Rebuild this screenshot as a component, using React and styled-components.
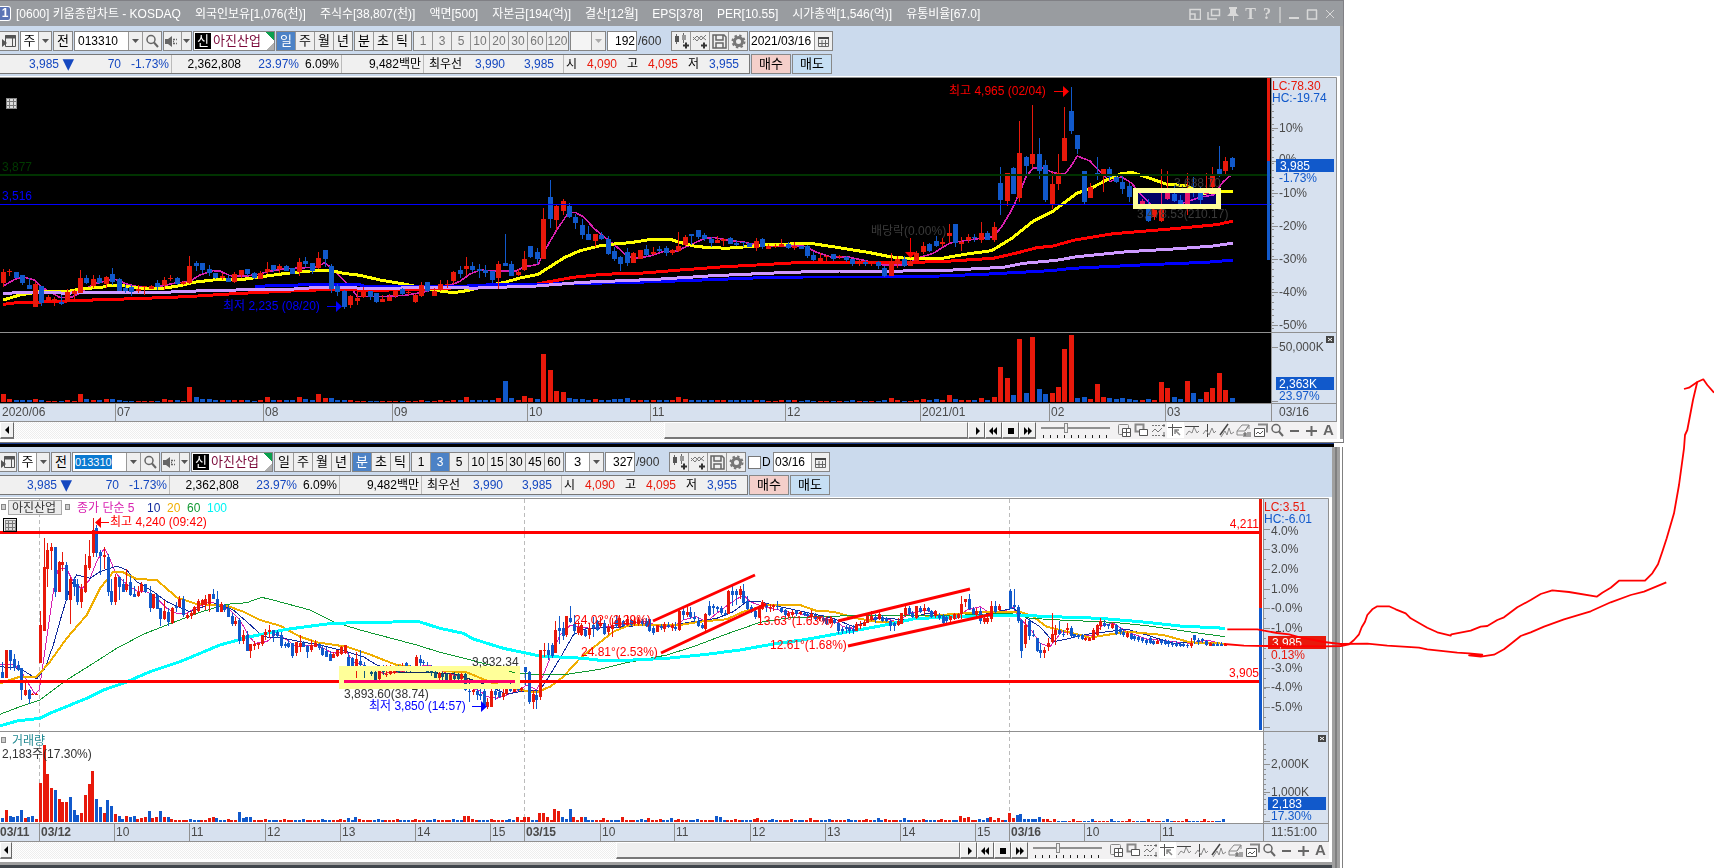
import React from "react";
import styled, { createGlobalStyle, css } from "styled-components";

const UI = '"Liberation Sans", "Noto Sans CJK KR", sans-serif';
const RED = "#e8190b";
const BLUE = "#1159cb";
const LINE = "#909090";
const AXIS = "#d7e1ef";

const Global = createGlobalStyle`
  body { margin: 0; background: #fff; font: 12px/18px ${UI}; color: #000; overflow-x: hidden; }
  * { box-sizing: border-box; }
  button, input, select { font: inherit; color: inherit; margin: 0; padding: 0; border: 0; border-radius: 0; }
`;

/* ---------- layout ---------- */
const Stage = styled.main`
  position: relative;
  display: grid;
  grid-template-columns: 1345fr 369fr;
  overflow: hidden;
`;
const Windows = styled.div`
  display: flex;
  flex-direction: column;
  min-width: 0;
`;
const TopWindow = styled.section`
  margin-right: 1px;
  border-top: 1px solid #808085;
  border-right: 1px solid #808085;
  border-bottom: 1px solid #777;
`;
const TopBody = styled.div`
  border-right: 3px solid #a0a0a0;
`;
const Divider = styled.div`
  height: 4px;
  margin-right: 11px;
  background: #000;
  border-top: 1px solid #1c3c8c;
`;
const BottomWindow = styled.section`
  display: grid;
  grid-template-columns: minmax(0, 1fr) 8px;
  margin-right: 2px;
  padding-right: 2px;
  border-right: 1px solid #808080;
`;
const Edge = styled.div`
  background: linear-gradient(90deg, #a0a0a0 0 3px, #808080 3px 5px, #a0a0a0 5px);
`;
const Base = styled.div`
  height: 6px;
  background: #a0a0a0;
  border-bottom: 3px solid #40464c;
`;
const Panel = styled.div`
  padding-right: 3px;
  background: #fff;
`;

const TitleBar = styled.header`
  display: flex;
  align-items: center;
  height: 25px;
  padding-right: 7px;
  background: #999ca0;
  color: #fff;
`;
const TitleBadge = styled.span`
  width: 11px;
  height: 15px;
  margin-right: 5px;
  border: 1px solid #fff;
  border-left: 0;
  border-radius: 0 3px 3px 0;
  background: #5b74b5;
  font: bold 12px/13px ${UI};
  text-align: center;
`;
const Title = styled.h1`
  display: flex;
  gap: 14px;
  margin: 0;
  font: 12px/18px ${UI};
  white-space: nowrap;
`;
const WindowTools = styled.div`
  display: flex;
  align-items: center;
  gap: 6px;
  margin-left: auto;
`;
const WindowTool = styled.button`
  display: grid;
  place-items: center;
  width: ${(p) => p.$w || 12}px;
  height: 16px;
  background: none;
  color: #d8d8d8;
  font: bold 16px/16px "Liberation Serif", serif;
`;

const Tools = styled.div`
  padding-bottom: 2px;
  background: #cbdaed;
  border-bottom: 1px solid #fff;
`;
const ToolRow = styled.div`
  display: flex;
  align-items: center;
  gap: 1px;
  padding-top: ${(p) => p.$top}px;
  white-space: nowrap;
`;
const Group = styled.div`
  display: flex;
  height: 20px;
  border: 1px solid #858585;
  background: #fff;
  & > * + * { border-left: 1px solid #999; }
  ${(p) => p.$edge && css`border-left: 0;`}
`;
const Cell = styled.button`
  display: grid;
  place-items: center;
  width: ${(p) => p.$w || 19}px;
  height: 18px;
  font-size: ${(p) => (p.$num ? 12 : 13)}px;
  line-height: 18px;
  background: #efefef;
  color: ${(p) => (p.$dim ? "#777" : "#000")};
  ${(p) => p.$on && css`background: #4c82c6; color: #fff;`}
`;
const Field = styled.input`
  width: ${(p) => p.$w}px;
  height: 18px;
  padding: 0 1px;
  background: #fff;
  text-align: ${(p) => p.$align || "left"};
`;
const Picked = styled.span`
  display: flex;
  align-items: center;
  width: ${(p) => p.$w}px;
  padding-left: 2px;
`;
const CodeField = styled.input`
  width: 37px;
  height: 14px;
  background: #0b7ad1;
  color: #fff;
  font: 11px/14px ${UI};
`;
const Select = styled.select`
  width: ${(p) => p.$w}px;
  height: 18px;
  appearance: none;
  background: ${(p) => (p.$off ? "#efefef" : "#fff")};
  text-align: center;
  text-align-last: center;
  font-size: 13px;
`;
const NameTag = styled.div`
  display: flex;
  align-items: center;
  width: 80px;
  padding-left: 1px;
  background: linear-gradient(225deg, #0aa04e 0 6px, transparent 6px),
    linear-gradient(315deg, #b0b0b0 0 5px, #fff 5px);
  color: #7a0838;
  font-size: 13px;
`;
const NewTag = styled.b`
  width: 16px;
  height: 16px;
  margin-right: 2px;
  background: #000;
  color: #fff;
  font: 13px/16px ${UI};
  text-align: center;
`;
const Total = styled.span`
  width: 32px;
  color: #333;
`;
const DayBox = styled.label`
  display: flex;
  align-items: center;
  width: 24px;
  margin-left: 1px;
  gap: 1px;
  input {
    width: 13px;
    height: 13px;
    appearance: none;
    border: 1px solid #777;
    background: #fff;
  }
`;

const Strip = styled.div`
  display: flex;
  height: 20px;
  border: 1px solid #777;
  border-left: 0;
  background: #f0f0f0;
`;
const Figure = styled.span`
  width: ${(p) => p.$w}px;
  text-align: right;
  padding-right: ${(p) => p.$pad || 0}px;
  border-right: ${(p) => (p.$end ? "1px solid #bbb" : "0")};
  color: ${(p) => p.$c || "#000"};
`;
const Falling = styled(Figure)`
  font: 15px/18px "DejaVu Sans", sans-serif;
`;
const Order = styled.button`
  width: 40px;
  height: 20px;
  border: 1px solid #888;
  background: ${(p) => (p.$buy ? "#f4cfca" : "#c6dff4")};
  font-size: 13px;
`;

const ChartSvg = styled.svg`
  display: block;
  width: 100%;
  font: 12px ${UI};
`;

const Controls = styled.div`
  display: flex;
  align-items: flex-start;
  height: 17px;
  margin-bottom: 3px;
  background: #f2f1f2;
`;
const Track = styled.div`
  flex: 1;
  display: flex;
  height: 17px;
  background: repeating-conic-gradient(#fff 0 25%, #eee 0 50%) 0 0 / 2px 2px;
`;
const Thumb = styled.div`
  width: ${(p) => p.$w}px;
  margin-left: auto;
  background: #efefef;
  border: 1px solid #fff;
  border-right-color: #777;
  border-bottom: 2px solid #777;
`;
const Push = styled.button`
  display: grid;
  place-items: center;
  width: ${(p) => p.$w || 17}px;
  height: 17px;
  background: #f0f0f0;
  border: 1px solid #fff;
  border-right: 1px solid #666;
  border-bottom: 2px solid #777;
`;
const Range = styled.input`
  width: 69px;
  height: 16px;
  margin: 0 6px 0 5px;
  appearance: none;
  background:
    linear-gradient(#909090, #909090) 0 5px / 69px 2px no-repeat,
    repeating-linear-gradient(90deg, transparent 0 2px, #222 2px 3px, transparent 3px 7px) 0 13px / 69px 3px no-repeat;
  &::-webkit-slider-thumb {
    appearance: none;
    width: 4px;
    height: 10px;
    margin-top: -5px;
    border: 1px solid #888;
    background: #eee;
  }
`;
const ToolSet = styled.div`
  display: flex;
`;
const Tool = styled.button`
  display: grid;
  place-items: center;
  width: 17px;
  height: 16px;
  background: ${(p) => (p.$on ? "#fff" : "none")};
`;
const Ink = styled.svg`
  position: absolute;
  inset: 0;
  width: 100%;
  height: 100%;
  pointer-events: none;
`;

/* ---------- icons ---------- */
const Svg = ({ w = 15, h = 15, children, c = "#666" }) => (
  <svg width={w} height={h} viewBox={`0 0 ${w} ${h}`} fill="none" stroke={c} aria-hidden="true">
    {children}
  </svg>
);
const Down = ({ c = "#555" }) => (
  <Svg w={9} h={5} c="none"><path d="M1 0h7L4.500 4z" fill={c} /></Svg>
);
const icons = {
  panel: <Svg w={16} h={16}><path d="M4.500 2.500h10v11h-10z" stroke="#555" /><path d="M4 4h11" stroke="#555" strokeWidth="3" /><path d="M11.500 5v9" stroke="#555" /><path d="M1 6l5 4-5 4z" fill="#555" stroke="none" /></Svg>,
  search: <Svg><circle cx="6" cy="5.500" r="4" strokeWidth="1.500" /><path d="M9 8.500l4 4.500" strokeWidth="2" /></Svg>,
  sound: <Svg><path d="M0 5h3l4-3v11l-4-3H0z" fill="#666" stroke="none" /><path d="M8 5.500h2M8 9.500h2M11 5.500h1M11 9.500h1M8 7.500h1" strokeWidth="1.500" /></Svg>,
  candles: <Svg w={17} h={16}><path d="M3.500 1v10M10.500 0v10" /><path d="M2 3h4v6H2z" fill="#555" stroke="none" /><path d="M9 2h4v5H9z" fill="#999" stroke="none" /><path d="M10 12.500h6M13 9.500v6" stroke="#333" strokeWidth="2" /></Svg>,
  waves: <Svg w={17} h={16}><path d="M1 7l4-4 4 4 5-5M1 4l4 4 4-5 5 4" stroke="#777" /><path d="M9 12.500h6M12 9.500v6" stroke="#333" strokeWidth="2" /></Svg>,
  save: <Svg><path d="M1 1h11l2 2v11H1z" strokeWidth="1.500" /><path d="M4 1v5h7V1M4 14V9h7v5" strokeWidth="1.500" /></Svg>,
  gear: <Svg><circle cx="7.500" cy="7.500" r="4" stroke="#777" strokeWidth="3" /><circle cx="7.500" cy="7.500" r="6" stroke="#777" strokeWidth="2" strokeDasharray="2.400 2.300" /></Svg>,
  cal: <Svg w={13} h={13}><path d="M1.500 2.500h10v9h-10zM1.500 8.500h10M5 5v6M8.500 5v6" /><path d="M1 3h11" stroke="#444" strokeWidth="2" /></Svg>,
  addBox: <Svg><rect x="1.500" y="1.500" width="10" height="10" rx="1" stroke="#888" /><path d="M5.500 5.500h8v8h-8z" fill="#fff" stroke="#555" /><path d="M9.500 6v8M6 9.500h8" stroke="#555" /></Svg>,
  boxes: <Svg><path d="M1.500 1.500h8v7h-8z" stroke="#888" strokeWidth="2" /><path d="M5.500 6.500h8v6h-8z" fill="#fff" stroke="#555" /></Svg>,
  fit: <Svg><path d="M1 2.500h9M1 12.500h9" strokeDasharray="2 1" stroke="#777" /><path d="M1 9l3-3 3 3 4-4" stroke="#777" /><path d="M13 1v3M13 9v5M11 2.500h3M11 12.500h3" stroke="#666" /></Svg>,
  cross: <Svg><path d="M0 4.500h14M4.500 1v12" stroke="#555" /><path d="M7 7l5 5M7 11V7h4" stroke="#888" strokeWidth="1.500" /></Svg>,
  hline: <Svg><path d="M0 3.500h14" stroke="#444" /><path d="M1 12l3-4 3 2 2-6 3 6 2-2" stroke="#888" /></Svg>,
  vline: <Svg><path d="M5.500 1v13" stroke="#444" /><path d="M1 11l3-4 3 5 3-7 2 5 2-2" stroke="#888" /></Svg>,
  slope: <Svg><path d="M1 12L9 1" stroke="#444" strokeWidth="1.500" /><path d="M2 14l4-6 2 4 2-7 2 6 3-2" stroke="#888" /></Svg>,
  eraser: <Svg><path d="M1 8l5-6h7l-4 6H1v4h6M9 8l4-6v4" stroke="#888" /><path d="M8 14v-4h2v4M8 12h2M12 9v5M14 9v5" stroke="#555" /></Svg>,
  sheets: <Svg><path d="M5 1.500h9v8" stroke="#888" strokeWidth="2" /><path d="M1.500 5.500h10v8h-10z" fill="#fff" stroke="#555" /><path d="M3 11l2-2 2 2 3-3" stroke="#555" /></Svg>,
  minus: <Svg><path d="M3 8h9" strokeWidth="2" /></Svg>,
  plus: <Svg><path d="M2 8h11M7.500 3v10" strokeWidth="2" /></Svg>,
};

/* ---------- chart data ---------- */
const candles = (str, ox, oy, start, step) =>
  str.split(";").map((s, i) => {
    const f = s.trim().split(/\s+/);
    const x = start === undefined ? ox + Number(f.shift()) / 3 : start + step * i;
    const red = f.shift() === "r";
    const [h, t, b, l] = f.map((v) => Math.round(oy + v / 3));
    return { x: Math.floor(x), red, h, t, b, l };
  });

const DAILY = [
  ...candles(
    "r 357 366 399 411;r 357 362 366 378;b 366 366 384 384;b 375 375 399 405;b 384 405 417 417;r 396 402 471 471;b 408 408 459 468;r 435 441 453 453;r 441 447 453 468;b 435 456 461 465;r 417 426 456 456;r 420 423 432 453;r 360 384 429 429;b 375 384 399 402;r 375 387 408 414;b 375 384 399 402;r 378 381 402 414;b 354 372 396 405;b 384 387 423 423;b 405 414 423 429;b 405 411 426 438;r 405 417 423 429;r 408 408 411 435;r 405 408 417 417;b 390 399 411 420;r 381 390 405 420;r 375 383 387 393;b 381 384 402 405;r 393 397 401 405;r 318 348 399 402;b 333 339 348 363;b 339 339 360 369;b 345 357 369 378;b 369 369 384 387;r 369 378 384 390;b 375 384 396 396;r 366 372 396 399;r 360 360 375 384;b 357 357 372 378;b 366 369 384 387;r 363 369 387 387;r 336 357 366 372;b 345 345 360 366;r 342 348 357 369;b 345 348 363 363;b 354 354 372 372;r 324 336 366 378;b 321 333 342 351;b 339 339 363 372;r 306 324 354 357;b 300 300 327 351;b 342 348 417 429;b 402 408 426 438;b 420 423 471 477;r 435 438 465 474;r 426 444 453 465;r 411 426 441 444;b 423 423 441 450;b 429 429 456 459;r 435 447 456 456;r 432 441 453 453;r 420 423 438 444;b 414 417 432 435;r 420 426 430 435;r 432 435 456 459;r 396 405 438 441;b 396 396 423 426;r 414 423 438 438;r 390 402 420 423;r 390 401 405 414;r 363 366 393 402;b 348 360 372 384;r 321 348 357 378;b 336 348 360 366;b 342 357 363 384;b 345 360 369 381;b 363 363 390 399;r 333 342 384 417;b 252 339 348 348;b 333 342 378 378;r 357 366 375 378;r 303 327 360 363;b 288 288 321 324;b 294 306 327 342;r 174 207 327 327;b 90 141 207 234;r 165 168 210 240;r 147 153 183 195;b 159 168 201 204;b 192 201 219 237;b 207 225 255 267;b 228 252 270 270;r 252 252 273 291;b 246 255 267 270;b 258 267 312 315;b 291 303 327 333;b 318 321 342 363;b 294 306 339 348;r 306 309 339 339;r 300 300 327 327;b 285 297 315 318;r 291 306 312 315;b 288 297 303 306;b 288 294 309 318;r 297 300 309 315;r 246 288 303 306;r 255 261 285 288;b 252 252 258 285;b 240 240 261 267;b 249 255 267 273;b 261 267 279 291;r 258 270 279 279;r 264 267 273 288;b 261 264 282 282;b 270 279 285 288;b 276 276 280 291;b 279 279 291 291;r 264 273 294 303;b 264 267 291 297;r 282 288 297 297;r 282 287 291 294;r 267 282 291 291;b 276 282 294 297;r 276 288 293 300;b 288 288 297 297;b 285 288 318 324;b 306 315 330 333;r 309 324 333 336;r 315 317 321 333;b 312 312 327 333;r 315 319 322 327;b 318 321 330 336;b 327 327 342 348;r 330 333 342 348;b 330 336 342 348;r 333 337 340 348;b 333 336 348 357;b 348 354 378 381;r 309 333 378 378;r 318 327 342 354;b 318 327 348 351;r 330 333 348 348;r 303 309 333 333;r 276 288 306 312;b 279 282 303 306;b 258 273 288 291;r 264 276 282 291",
    0, 150, 3.3, 6.434
  ),
  ...candles(
    "r 432 459 468 489;b 432 432 489 501;r 471 487 491 513;r 462 471 480 489;b 462 471 475 486;r 426 459 480 489;b 453 459 480 480;r 426 441 480 486;b 261 309 360 405;r 279 279 363 378;b 261 264 342 342;r 123 219 354 366;b 228 231 258 282;r 75 222 252 264;b 174 222 273 297;b 240 255 360 366;r 276 312 375 388;r 222 279 312 330;r 81 174 243 243;b 21 93 153 161;b 165 165 207 222;b 273 273 366 372;r 309 321 354 354;b 231 279 285 300;r 267 267 285 336;b 261 267 291 300;b 285 290 306 309;b 288 306 327 342;b 309 318 351 366;b 345 350 366 372;r 357 363 375 380;b 357 372 423 426;r 375 381 411 420;r 267 383 423 426;r 273 340 356 360;b 318 342 363 366;b 345 360 376 390;r 279 340 375 405;b 290 318 322 350;b 321 340 360 378;r 279 339 342 345;r 261 288 321 339;b 198 267 282 291;r 231 243 273 282;b 231 234 261 270",
    0, 80, 949.1, 6.434
  ),
];
const DAILY_VOLUME =
  "8 3 2 2 2 3 2 1 1 1 2 1 8 3 2 2 3 3 2 1 1 1 1 1 1 3 2 2 1 15 5 3 3 2 2 2 2 2 2 1 2 5 2 2 2 2 5 3 2 8 4 4 2 2 2 1 1 1 1 1 1 1 1 1 1 2 1 1 2 1 2 2 5 2 2 2 2 4 21 4 2 6 4 3 48 32 11 10 4 3 3 2 3 2 2 3 3 4 2 2 2 2 2 2 2 5 3 2 2 2 2 2 2 2 2 2 2 2 2 1 1 2 2 2 1 2 1 1 1 1 1 1 2 1 1 1 1 2 4 2 1 1 2 3 2 3 2 7 3 2 2 2 4 2 5 35 24 7 63 9 65 13 8 9 15 53 67 4 5 3 18 5 4 3 4 3 2 2 3 2 20 14 5 3 21 9 3 10 14 29 12 4"
    .split(" ").map(Number);
const RISING_VOLUME = [50, 82, 85, 155, 166, 170, 189];

const MINUTE = [
  ...candles(
    "8 b 680 711 729 729;20 r 645 645 729 729;31 b 645 645 678 705;43 b 657 672 700 708;54 b 678 690 705 708;65 b 700 700 765 795;77 r 735 765 780 783;88 b 762 765 793 808;98 r 774 777 780 781;110 r 775 777 780 780;122 r 528 570 684 684;134 r 309 396 588 588;143 r 324 345 402 456;155 r 324 335 348 405;167 b 336 336 471 485;179 r 378 381 471 471;187 r 351 381 390 408;199 b 381 390 495 495;211 r 426 432 495 567;223 b 426 432 456 482;232 b 432 447 501 510;244 r 447 462 501 520;257 r 357 390 471 474;268 r 315 363 398 405;281 r 249 285 354 366;290 b 270 279 354 366;301 b 345 351 363 420;313 r 336 359 366 402;325 b 357 366 471 482;335 b 432 468 500 510;347 r 417 426 501 510;359 b 426 426 456 495;370 b 432 447 470 471;379 r 402 447 465 471;392 b 423 441 480 483;403 b 453 477 486 486;415 r 453 471 482 486;425 r 441 447 468 474;436 b 447 447 471 474;450 b 453 475 520 531;460 r 477 477 520 522;471 b 477 480 522 522;482 b 519 520 552 573;493 r 495 528 552 555;505 b 519 530 560 573;517 r 516 519 564 567;528 b 500 514 518 530;539 r 483 492 516 516;550 b 483 492 540 546;562 r 534 540 549 552;573 r 528 534 543 552;583 r 513 516 537 540;595 r 492 498 528 530;606 r 492 495 510 516;617 r 480 492 510 525;628 r 477 477 507 531;640 b 462 477 492 492;652 b 468 492 531 531;663 r 501 507 531 531;673 b 507 510 525 531;685 b 510 519 546 546;697 b 534 543 567 573;706 r 546 558 567 573;718 b 549 555 618 627;730 r 585 600 618 627;741 b 588 600 648 648;752 r 627 627 648 669;763 r 618 627 633 645;775 r 625 625 629 641;787 r 600 600 627 633;797 r 582 591 600 615;808 r 570 586 590 609;820 b 585 585 603 621;832 b 585 591 603 609;844 b 591 600 633 639;855 b 621 627 633 639;866 b 615 624 636 639;877 b 624 624 663 669;890 r 621 621 654 663;900 r 600 624 636 651;911 b 618 624 636 636;922 b 630 633 651 669;935 r 615 630 645 651;947 r 615 624 636 636;958 b 624 627 639 645;967 b 630 639 660 663;979 b 636 648 666 666;990 b 648 657 678 678;1001 r 651 657 669 669;1013 r 645 645 663 666;1023 r 633 636 657 660;1035 r 630 630 654 657;1046 b 654 666 693 700;1058 b 666 669 693 700;1070 r 651 672 693 728;1081 b 645 678 690 700;1092 b 680 690 694 728;1115 b 700 710 718 722;1127 b 705 710 735 740;1138 r 696 706 733 735;1150 b 690 700 712 720;1160 r 690 717 720 725;1172 r 690 705 716 720;1184 r 695 706 715 718;1195 b 690 706 712 714;1207 r 685 693 708 710;1218 b 681 685 696 710;1230 b 690 697 708 710;1250 r 660 666 696 696;1260 b 660 672 684 694;1271 b 675 681 685 690;1283 b 680 700 712 714;1295 b 690 708 715 722;1306 b 700 712 728 730;1318 r 712 715 728 735",
    0, 435
  ),
  ...candles(
    "8 b 712 717 727 735;20 b 715 718 735 737;31 r 715 720 735 738;43 b 712 722 733 737;54 b 715 717 732 740;65 r 714 716 732 738;77 b 714 717 765 768;88 b 735 768 772 800;99 r 762 765 771 780;111 b 750 768 780 795;122 b 762 777 783 795;133 b 755 768 810 816;143 r 790 801 816 822;155 r 762 768 816 816;166 b 755 768 780 795;178 b 762 770 786 790;189 r 762 775 785 795;200 r 756 763 777 780;212 b 745 758 768 772;223 r 758 763 771 771;235 b 760 762 766 768;245 r 756 760 766 770;257 b 696 696 712 750;268 b 708 711 801 807;280 r 765 777 801 822;290 b 765 780 795 822;302 r 645 645 786 795;313 r 624 645 649 666;325 b 624 645 661 675;336 b 624 630 663 669;347 r 558 585 654 654;359 b 543 579 587 627;370 b 561 579 603 615;380 r 543 543 600 606;392 b 513 549 560 565;404 b 540 567 588 600;415 r 558 576 594 600;425 r 564 570 600 603;437 b 580 585 603 606;448 r 564 579 600 612;459 b 546 570 580 606;471 b 555 558 585 588;482 r 546 564 573 580;493 b 555 564 597 600;505 r 567 576 591 600;516 r 550 570 582 606;528 b 540 555 573 579;539 r 540 550 575 578;550 b 555 558 573 576;561 r 540 552 570 573;573 b 552 556 570 574;584 r 546 558 567 574;595 r 546 555 567 573;606 b 552 558 567 572;618 b 549 558 573 576;628 b 552 552 588 591;640 b 573 579 594 600;652 r 570 570 591 591;663 b 567 573 578 585;673 r 561 567 582 591;685 b 561 569 575 580;696 r 564 570 579 588;707 b 561 576 583 588;718 r 525 528 585 588;730 b 516 528 540 555;741 r 513 530 540 545;752 b 516 531 546 552;763 b 531 546 552 561;775 b 546 558 573 576;787 b 564 570 580 582;797 r 534 537 582 588;808 b 498 513 540 542;820 b 507 514 518 536;832 b 513 517 521 530;844 b 513 518 534 540;855 b 525 534 540 543;866 r 465 468 537 537;877 b 453 468 480 513;889 b 462 468 480 510;900 r 453 462 480 492;911 b 447 468 504 504;922 b 483 498 522 525;935 b 510 516 531 534;947 b 516 528 546 552;958 r 510 519 546 549;967 r 495 501 522 525;980 b 504 511 517 530;990 r 507 515 520 530;1001 r 507 510 516 528;1013 b 498 513 516 525;1024 b 516 519 530 534;1035 b 522 525 540 546;1046 r 528 533 543 549;1058 r 525 531 540 546;1069 b 525 529 536 543;1081 r 528 532 538 540;1092 b 528 534 540 543;1103 b 530 537 543 549;1115 r 525 537 545 555;1127 b 534 540 552 555;1138 r 543 546 552 558;1150 b 540 549 558 564;1160 b 546 552 567 570;1172 r 546 552 563 567;1184 b 552 555 564 567;1194 b 555 564 588 597;1207 b 576 582 587 597;1218 b 570 577 582 594;1229 b 570 578 588 597;1240 b 570 583 588 597;1250 r 561 567 588 588;1261 r 558 567 573 582;1272 r 555 561 573 573;1283 r 537 543 564 564;1295 r 528 543 555 558;1306 b 537 546 555 564;1318 r 525 537 552 555",
    440, 435
  ),
  ...candles(
    "8 b 540 547 558 560;20 b 546 549 558 561;31 b 555 558 572 587;43 b 560 564 573 587;54 r 549 558 570 573;65 r 534 534 567 567;77 r 510 519 540 546;88 b 513 519 537 540;98 b 528 534 546 549;110 r 513 513 549 552;122 b 513 519 531 534;133 r 507 519 528 540;144 b 516 519 528 531;155 b 525 528 546 549;166 r 525 528 543 549;178 b 534 540 549 555;189 b 537 543 564 570;200 b 540 546 558 567;211 r 543 543 555 567;223 r 534 537 552 555;235 r 534 537 549 552;245 r 483 507 537 552;257 r 492 492 501 516;268 b 477 492 522 525;280 b 516 522 537 540;290 r 519 528 540 545;301 b 519 528 558 567;313 r 540 549 561 567;323 r 540 549 561 567;335 r 498 513 552 561;347 b 498 513 531 534;359 r 507 513 525 528;391 b 462 468 522 522;403 b 462 510 517 522;415 b 510 516 558 564;425 b 552 555 648 669;437 r 552 570 627 639;448 b 552 558 603 615;460 b 585 600 603 606;472 b 609 609 648 650;482 b 624 645 654 669;493 r 636 645 654 669;505 r 609 624 636 648;517 r 534 597 621 624;527 r 570 585 600 630;539 b 558 585 597 600;551 b 585 596 600 605;562 r 564 580 586 600;573 b 573 579 603 606;584 b 597 597 606 609;595 b 597 600 606 612;606 b 597 600 612 615;617 r 606 609 615 618;629 r 606 609 617 618;640 r 579 585 615 615;652 r 567 570 600 603;662 r 549 558 573 585;673 b 555 564 573 576;685 b 567 568 573 582;697 r 561 567 579 582;709 b 567 570 597 600;720 b 576 582 591 600;731 b 585 591 600 606;742 r 588 594 606 609;753 b 594 597 612 615;764 b 600 603 612 618;776 b 603 606 615 620;787 b 606 609 618 624;798 b 612 615 624 630;810 b 606 609 624 628;820 b 615 618 627 630;832 r 612 618 627 627;844 b 612 615 624 630;855 b 612 618 626 630;866 b 615 618 627 636;878 b 618 624 630 636;889 b 618 624 633 636;900 b 621 627 633 636;911 b 624 627 633 636;922 b 627 630 633 639;933 r 609 624 633 639;944 b 600 600 615 627;955 b 609 615 621 630;967 b 609 612 618 624;978 b 615 618 630 633;990 r 621 624 633 633;1001 b 624 627 633 633;1013 b 621 627 633 633;1024 b 621 627 633 633;1036 r 624 626 632 633",
    880, 435
  ),
];

const OPENING_VOLUME = [4, 12, 6, 5, 6, 12, 4, 5, 6, 3, 39, 77, 48, 34, 32, 23, 20, 20, 25, 12, 7, 9, 27, 38, 51, 23, 15, 9, 22, 16, 8, 6, 3, 6, 5, 6, 3, 4, 5, 11, 4, 5, 11, 5, 5, 3];
const VOLUME_PEAKS = { 55: 4, 56: 5, 57: 4, 63: 10, 64: 4, 65: 5, 66: 5, 92: 4, 94: 5, 123: 6, 124: 6, 137: 5, 139: 5, 140: 5, 143: 9, 144: 9, 145: 5, 147: 13, 148: 11, 149: 5, 151: 13, 152: 5, 154: 5, 155: 5, 160: 4, 165: 5, 172: 4, 178: 4, 190: 6, 191: 5, 201: 4, 215: 4, 233: 4, 240: 4, 255: 6, 256: 4, 257: 5, 260: 3, 262: 4, 263: 5, 265: 4, 268: 9, 269: 4, 270: 7, 271: 8, 272: 3, 273: 3, 274: 3, 275: 3, 276: 5, 277: 3, 278: 3 };
const OPENING_BLUE = [0, 2, 3, 4, 5, 7, 8, 14, 18, 19, 20, 25, 26, 28, 29, 31, 32, 34, 35, 39, 42, 44];
const LATER_BLUE = [63, 151, 270, 271, 272, 273, 274, 275, 276];
const LATER_RED = [143, 144, 147, 148, 255, 268, 269];
const MINUTE_VOLUME = Array.from({ length: 326 }, (_, i) => ({
  x: Math.floor(1.7 + i * 3.757),
  h: OPENING_VOLUME[i] ?? VOLUME_PEAKS[i] ?? ((i * 7) % 5 === 0 ? 3 : i > 278 ? 1 : 2),
  red: i < 46 ? !OPENING_BLUE.includes(i) : LATER_RED.includes(i) || (!LATER_BLUE.includes(i) && (i * 13) % 7 < 4),
}));

const line = (...parts) =>
  parts
    .map(([ox, oy, s]) =>
      s.split(" ").map((p) => {
        const [x, y] = p.split(",").map(Number);
        return `${(ox + x / 3).toFixed(1)},${(oy + y / 3).toFixed(1)}`;
      }).join(" ")
    )
    .join(" ");

const DAILY_LINES = [
  { c: "#d820b0", w: 1.6, p: line([0, 150, "10,408 46,387 70,381 103,390 124,411 145,423 181,443 215,441 240,430 280,402 316,393 345,388 380,402 415,411 454,414 490,407 530,398 568,395 600,375 640,362 660,363 690,377 740,378 780,372 800,366 850,357 900,354 950,351 973,339 990,350 1012,370 1033,393 1050,410 1072,439 1120,440 1160,439 1215,436 1250,430 1280,424 1320,412 1360,402 1380,394 1410,372"], [470, 150, "30,360 60,362 140,362 165,350 205,343 225,300 260,240 295,189 315,187 340,200 375,238 415,270 440,290 470,318 500,325 540,318 580,305 620,303 660,285 700,267 730,262 780,272 820,276 860,285 900,287 960,288 1000,288 1040,307 1080,320 1130,320 1190,333 1240,345 1310,345 1340,325 1390,310"], [940, 80, "0,507 30,489 100,478 160,470 185,440 215,390 240,335 258,290 280,264 310,264 335,276 350,280 375,282 395,255 412,228 450,243 480,275 510,305 545,290 575,310 600,340 640,380 690,385 720,372 780,352 820,345 850,305 877,282"]) },
  { c: "#ffff00", w: 3, p: line([0, 150, "10,450 60,435 130,423 210,423 250,415 300,413 330,406 360,405 390,411 420,415 490,415 540,407 580,397 640,390 730,388 800,378 860,370 940,362 985,360 1030,370 1080,376 1140,390 1200,400 1260,412 1320,423 1360,428 1400,422"], [470, 150, "0,420 60,405 100,398 150,384 205,373 240,350 285,322 330,302 390,287 440,281 480,278 545,268 600,268 640,280 680,290 770,295 830,290 880,285 1020,280 1100,292 1200,308 1260,320 1330,327 1400,326"], [940, 80, "0,536 80,522 155,512 215,475 280,423 340,393 410,340 450,326 500,300 545,280 580,278 630,295 680,313 740,317 790,340 850,335 880,334"]) },
  { c: "#ff0000", w: 3, p: line([0, 150, "10,463 60,457 130,456 250,451 400,446 560,440 700,431 850,424 1000,418 1100,421 1240,419 1400,412"], [470, 150, "90,409 200,402 310,382 400,373 520,369 620,361 750,351 860,345 980,338 1100,338 1250,337 1320,337"], [940, 80, "0,545 160,535 230,519 290,503 340,498 400,481 520,461 700,446 830,434 880,423"]) },
  { c: "#0000ff", w: 3, p: line([0, 150, "765,409 925,404 1080,404 1090,408 1400,408"], [470, 150, "0,407 70,404 180,405 300,400 400,399 560,395 720,389 850,384 1000,381 1250,381"], [940, 80, "0,588 130,583 330,572 400,565 600,555 800,547 880,540"]) },
  { c: "#cc99ff", w: 3, p: line([0, 150, "10,430 120,426 200,430 240,427 490,427 640,421 870,418 960,412 1120,415 1400,412"], [470, 150, "0,415 200,408 340,397 560,388 730,377 960,367 1110,363 1300,363"], [940, 80, "0,572 190,562 250,550 350,541 410,530 560,515 700,507 820,498 880,489"]) },
];
const MINUTE_LINES = [
  { c: "#d820b0", w: 1, p: line([0, 435, "0,690 40,688 65,710 85,745 105,777 118,765 130,680 140,610 160,470 175,400 199,400 220,440 245,462 268,435 290,380 313,340 325,360 345,410 365,435 390,455 415,470 440,470 470,490 500,520 530,535 560,535 585,520 630,500 660,510 690,525 720,555 745,600 765,625 800,620 830,595 860,615 890,635 920,630 950,630 990,650 1010,655 1040,650 1060,680 1090,690 1150,715 1210,710 1250,695 1290,690 1340,715"], [440, 435, "80,730 100,762 120,768 140,785 170,790 200,780 240,765 260,750 290,765 310,720 330,670 360,600 390,572 420,575 450,580 500,575 620,560 660,575 700,575 730,555 770,545 800,560 830,535 870,505 910,480 930,500 970,515 1040,530 1180,555 1210,575 1240,580 1290,555"], [880, 435, "0,545 50,560 90,535 140,525 190,545 230,550 260,525 300,515 340,540 400,518 420,550 450,580 480,625 510,635 545,590 600,600 640,600 670,570 700,565 740,590 800,612 860,618 930,625 980,615 1035,628"]) },
  { c: "#102a9c", w: 1, p: line([0, 435, "0,695 60,700 110,732 135,700 160,630 185,540 210,460 230,420 270,430 300,410 350,393 380,405 410,440 460,470 500,500 570,530 610,515 650,505 700,525 740,560 790,605 850,610 900,620 960,630 1040,650 1090,665 1130,690 1200,712"], [440, 435, "40,715 140,750 200,778 240,770 300,765 330,720 360,670 400,600 440,580 520,578 640,568 700,570 760,560 830,550 880,530 920,500 960,500 1020,515 1180,550 1240,575"], [880, 435, "0,548 80,555 140,535 200,540 280,545 400,520 440,550 480,575 520,620 560,612 620,598 700,588 740,582 800,600 880,625 960,622 1035,626"]) },
  { c: "#f0ae00", w: 2, p: line([0, 435, "0,745 60,725 110,725 150,680 200,610 260,540 300,460 340,410 370,412 410,432 470,435 530,487 590,507 680,512 730,530 780,555 840,572 900,605 950,622 1040,635 1100,655 1190,690 1250,697"], [440, 435, "40,710 80,712 160,745 240,765 290,772 330,755 370,725 420,670 470,630 520,590 570,570 720,570 780,560 860,553 910,530 980,510 1080,510 1130,528 1180,530 1250,550"], [880, 435, "0,562 60,560 180,540 300,532 420,530 460,545 500,575 560,590 630,608 740,590 850,600 930,622 1035,626"]) },
  { c: "#119933", w: 1, p: line([0, 435, "0,838 60,815 120,795 200,735 280,685 350,640 430,598 500,570 600,532 680,508 740,503 785,487 830,498 930,525 1000,560 1080,585 1250,630"], [440, 435, "0,652 80,672 150,690 220,712 280,718 380,718 480,703 560,683 680,660 760,635 860,597 960,562 1050,548 1200,543"], [880, 435, "0,542 200,542 390,535 450,550 540,555 700,562 800,572 960,595 1035,605"]) },
  { c: "#00ffff", w: 3, p: line([0, 435, "0,873 50,858 120,850 150,835 260,790 310,765 370,745 450,710 540,680 660,630 750,605 860,583 980,567 1080,562 1180,561 1250,558"], [440, 435, "0,580 70,595 100,612 190,640 300,663 430,670 480,676 560,676 680,670 800,658 900,645 1000,627 1100,613 1200,595"], [880, 435, "0,573 100,552 180,547 340,542 420,541 520,545 660,550 800,562 900,573 1036,580"]) },
];
const SKETCH = [
  line([1214, 370, "40,778 130,778 150,782 190,789 225,793 260,803 300,810 330,816 380,822 460,821 520,827 615,833 640,838 730,848 765,850 805,854 765,856 800,860 840,854 870,838 890,822 920,798 950,787 990,770 1050,748 1090,736 1130,724 1190,697 1250,675 1290,665 1357,637"]),
  line([1214, 370, "30,822 90,827 160,828 330,829 380,828 405,823 420,810 435,793 443,772 453,755 460,735 475,718 490,709 525,709 545,718 575,730 590,745 640,773 670,787 710,797 712,793 770,782 800,770 820,768 850,750 870,742 910,712 950,690 980,672 1015,661 1065,666 1148,680 1165,668 1190,653 1215,632 1293,632 1300,625 1315,610 1332,583 1345,545 1358,505 1380,430 1395,345 1410,235 1413,195 1420,180 1437,90 1450,35"]),
  line([1214, 370, "1410,57 1425,53 1450,36 1468,28 1480,45 1500,68"]),
];

/* ---------- chart parts ---------- */
const Candles = ({ data, half }) =>
  data.map((k, i) => (
    <g key={i} fill={k.red ? RED : BLUE}>
      <rect x={k.x} y={k.h} width="1" height={Math.max(1, k.l - k.h)} />
      <rect x={k.x - half} y={k.t} width={half * 2 + 1} height={Math.max(1, k.b - k.t)} />
    </g>
  ));
const Averages = ({ lines }) =>
  lines.map((l) => <polyline key={l.c} points={l.p} fill="none" stroke={l.c} strokeWidth={l.w} />);
const Ticks = ({ x, from, to, step, major }) => (
  <g stroke={LINE}>
    {Array.from({ length: Math.floor((to - from) / step) + 1 }, (_, i) => Math.round(from + i * step) + 0.5).map((y) => (
      <path key={y} d={`M${x} ${y}h2`} />
    ))}
    {major.map((y) => <path key={y} d={`M${x} ${y + 0.5}h6`} />)}
  </g>
);
const Labels = ({ x, items, fill = "#4a4a4a" }) =>
  items.map(([y, t]) => <text key={y} x={x} y={y + 5} fill={fill}>{t}</text>);
const CloseBox = ({ x, y }) => (
  <g>
    <rect x={x} y={y} width="8" height="7" fill="#444" />
    <path d={`M${x + 2} ${y + 2}l4 3m0-3l-4 3`} stroke="#fff" />
  </g>
);
const TableMark = ({ x, y, boxed }) => (
  <g fill="none">
    {boxed && <rect x={x - 2.5} y={y - 2.5} width="13" height="13" fill="#eee" stroke="#000" />}
    <rect x={x - 0.5} y={y - 0.5} width="10" height="10" fill="#ddd" stroke="#888" />
    <path d={`M${x} ${y + 2.5}h9M${x} ${y + 6.5}h9M${x + 2.5} ${y}v9M${x + 6.5} ${y}v9`} stroke="#777" />
  </g>
);
const DateAxis = ({ y, width, items, end, endX, gap = 8 }) => (
  <g>
    <rect x="0" y={y} width={width} height="18" fill={AXIS} />
    <path d={`M0 ${y + 0.5}h${width}M0 ${y + 18.5}h${width}`} stroke={LINE} />
    {items.map(([x, t, bold]) => (
      <g key={x}>
        {x > 0 && <path d={`M${x + 0.5} ${y}v18`} stroke={LINE} />}
        <text x={x + 2} y={y + 13} fill="#4a4a4a" fontWeight={bold ? "bold" : "normal"}>{t}</text>
      </g>
    ))}
    <path d={`M${endX + 0.5} ${y + 1}v17`} stroke={LINE} />
    <text x={endX + gap} y={y + 13} fill="#4a4a4a">{end}</text>
  </g>
);

const DailyChart = () => (
  <ChartSvg viewBox="0 77 1337 345" role="img" aria-label="일봉 차트">
    <rect x="0" y="77" width="1271" height="326" fill="#000" />
    <rect x="1271" y="77" width="66" height="326" fill={AXIS} />
    <TableMark x={7} y={99} />
    <g shapeRendering="crispEdges">
      <Averages lines={DAILY_LINES} />
      <Candles data={DAILY} half={2} />
      {DAILY_VOLUME.map((h, i) => (
        <rect
          key={i}
          x={Math.floor(3.3 + 6.434 * i) - 2}
          y={402 - h}
          width="5"
          height={h}
          fill={DAILY[i].red || RISING_VOLUME.includes(i) ? RED : BLUE}
        />
      ))}
      <path d="M0 175h1271" stroke="#003300" strokeWidth="2" />
      <path d="M0 204.500h1271" stroke="#0000ff" />
      <path d="M0 332.500h1337" stroke={LINE} />
    </g>
    <text x="1174" y="187" fill="#3a3a3a">3,688.70</text>
    <text x="1137" y="218" fill="#3a3a3a">3,478.53(210.17)</text>
    <rect x="1137" y="192" width="80" height="13" fill="#000066" style={{ mixBlendMode: "screen" }} />
    <rect x="1135.500" y="190.500" width="83" height="16" fill="none" stroke="#ffff99" strokeWidth="5" />
    <text x="2" y="171" fill="#003a00">3,877</text>
    <text x="2" y="200" fill="#0000ff">3,516</text>
    <g fill="#ff0000" stroke="none">
      <text x="949" y="95">최고 4,965 (02/04)</text>
      <path d="M1054 91h9v-5l6 5.500-6 5.500v-5h-9z" />
      <path d="M910 238h1v14h5l-5.500 6-5.500-6h5z" />
    </g>
    <g fill="#0000ff">
      <text x="223" y="310">최저 2,235 (08/20)</text>
      <path d="M327 306h9v-5l6 5.500-6 5.500v-5h-9z" />
    </g>
    <text x="871" y="235" fill="#3a3a3a">배당락(0.00%)</text>
    <rect x="1267" y="78" width="3" height="83" fill={RED} />
    <rect x="1267" y="161" width="3" height="99" fill={BLUE} />
    <Ticks x={1272} from={104} to={330} step={6.6} major={[128, 161, 193, 226, 259, 292, 325, 347, 401]} />
    <Labels x={1279} items={[[127, "10%"], [158, "0%"], [192, "-10%"], [225, "-20%"], [258, "-30%"], [291, "-40%"], [324, "-50%"], [346, "50,000K"]]} />
    <text x="1272" y="90" fill={RED}>LC:78.30</text>
    <text x="1272" y="102" fill={BLUE}>HC:-19.74</text>
    <rect x="1276" y="159" width="58" height="13" fill={BLUE} />
    <rect x="1276" y="377" width="58" height="13" fill={BLUE} />
    <g fill="#fff"><text x="1280" y="170">3,985</text><text x="1279" y="388">2,363K</text></g>
    <g fill={BLUE}><text x="1279" y="182">-1.73%</text><text x="1279" y="400">23.97%</text></g>
    <CloseBox x={1326} y={336} />
    <DateAxis
      y={403}
      width={1337}
      items={[[0, "2020/06"], [115, "07"], [263, "08"], [392, "09"], [527, "10"], [650, "11"], [785, "12"], [920, "2021/01"], [1049, "02"], [1165, "03"]]}
      end="03/16"
      endX={1271}
    />
    <path d="M0 77.500h1336.500V421M1271.500 78v325" fill="none" stroke={LINE} />
  </ChartSvg>
);

const MinuteChart = () => (
  <ChartSvg viewBox="0 498 1329 344" role="img" aria-label="분봉 차트">
    <rect x="0" y="498" width="1329" height="326" fill="#fff" />
    <rect x="1263" y="498" width="66" height="326" fill={AXIS} />
    <path d="M39.500 499v324M524.500 499v324M1009.500 499v324" stroke="#bbb" strokeDasharray="4 3" />
    <g shapeRendering="crispEdges">
      <Averages lines={MINUTE_LINES} />
      <Candles data={MINUTE} half={1} />
      {MINUTE_VOLUME.map((v, i) => (
        <rect key={i} x={v.x} y={822 - v.h} width="3" height={v.h} fill={v.red ? RED : BLUE} />
      ))}
      <path d="M0 731.500h1329" stroke={LINE} />
    </g>
    <rect x="344" y="671" width="171" height="13" fill="#ffff99" style={{ mixBlendMode: "multiply" }} />
    <rect x="341.500" y="668.500" width="176" height="18" fill="none" stroke="#ffff99" strokeWidth="5" />
    <g stroke="#ff0000" strokeWidth="3">
      <path d="M0 532.500h1262M0 681.500h339M520 681.500h742M653 621L755 575M661 653L766 604M838 621L970 589M848 646L993 614" />
      <path d="M344 681.500h171" stroke="#ff0066" />
    </g>
    <rect x="8.500" y="500.500" width="53" height="14" fill="#ebebeb" stroke="#aaa" />
    <g fill="#ccc" stroke="#888">
      <rect x="1.500" y="504.500" width="4" height="5" />
      <rect x="65.500" y="504.500" width="4" height="5" />
      <rect x="1.500" y="737.500" width="4" height="5" />
    </g>
    <text x="12" y="512" fill="#333">아진산업</text>
    <text x="77" y="512" fill="#d820b0">종가 단순 5</text>
    <text x="147" y="512" fill="#102a9c">10</text>
    <text x="167" y="512" fill="#f0ae00">20</text>
    <text x="187" y="512" fill="#119933">60</text>
    <text x="207" y="512" fill="#00f4f4">100</text>
    <TableMark x={6} y={521} boxed />
    <g fill="#ff0000">
      <text x="110" y="526">최고 4,240 (09:42)</text>
      <path d="M109 522h-8v-5l-6 5.500 6 5.500v-5h8z" />
      <text x="574" y="624">24.02°(2.29%)</text>
      <text x="581" y="656">24.81°(2.53%)</text>
      <text x="757" y="625">13.63°(1.63%)</text>
      <text x="770" y="649">12.61°(1.68%)</text>
      <text x="1259" y="528" textAnchor="end">4,211</text>
      <text x="1259" y="677" textAnchor="end">3,905</text>
    </g>
    <g fill="#333">
      <text x="344" y="698">3,893.60(38.74)</text>
      <text x="472" y="666">3,932.34</text>
      <text x="2" y="758">2,183주(17.30%)</text>
    </g>
    <text x="12" y="745" fill="#238a92">거래량</text>
    <g fill="#0000ff">
      <text x="369" y="710">최저 3,850 (14:57)</text>
      <path d="M472 706h9v-5l6 5.500-6 5.500v-5h-9z" />
    </g>
    <rect x="1259" y="499" width="3" height="109" fill={RED} />
    <rect x="1259" y="608" width="3" height="122" fill={BLUE} />
    <Ticks x={1264} from={539} to={730} step={9.9} major={[529, 549, 569, 589, 608, 628, 668, 687, 707, 727, 764, 792, 821]} />
    <Ticks x={1264} from={744} to={816} step={5} major={[]} />
    <Labels x={1271} items={[[530, "4.0%"], [548, "3.0%"], [568, "2.0%"], [588, "1.0%"], [607, "-0.0%"], [627, "-1.0%"], [667, "-3.0%"], [686, "-4.0%"], [706, "-5.0%"], [763, "2,000K"], [791, "1,000K"]]} />
    <rect x="1264" y="500" width="64" height="24" fill={AXIS} />
    <text x="1264" y="511" fill={RED}>LC:3.51</text>
    <text x="1264" y="523" fill={BLUE}>HC:-6.01</text>
    <rect x="1268" y="636" width="58" height="13" fill={RED} />
    <rect x="1268" y="797" width="58" height="13" fill={BLUE} />
    <g fill="#fff"><text x="1272" y="647">3,985</text><text x="1272" y="808">2,183</text></g>
    <text x="1271" y="659" fill={RED}>0.13%</text>
    <text x="1271" y="820" fill={BLUE}>17.30%</text>
    <CloseBox x={1318} y={735} />
    <DateAxis
      y={823}
      width={1329}
      items={[[-2, "03/11", 1], [39, "03/12", 1], [114, "10"], [189, "11"], [265, "12"], [340, "13"], [415, "14"], [490, "15"], [524, "03/15", 1], [600, "10"], [674, "11"], [750, "12"], [825, "13"], [900, "14"], [975, "15"], [1009, "03/16", 1], [1084, "10"], [1160, "11"]]}
      end="11:51:00"
      endX={1263}
    />
    <path d="M0 498.500h1328.500V841M1263.500 499v324" fill="none" stroke={LINE} />
  </ChartSvg>
);

/* ---------- toolbars ---------- */
const cellWidth = (text, i) => (text.length > 2 ? 22 : i ? 19 : 18);
const Segments = ({ items, active, dim, num }) => (
  <Group>
    {items.map((t, i) => (
      <Cell key={t} $on={t === active} $dim={dim} $num={num} $w={cellWidth(t, i)}>{t}</Cell>
    ))}
  </Group>
);

const Toolbar = ({ first, top, period, units, unit, interval, count, total, date, selected, day }) => (
  <ToolRow $top={top}>
    <Group $edge><Cell $w={first} aria-label="패널">{icons.panel}</Cell></Group>
    <Group>
      <Select $w={17} aria-label="구분" defaultValue="주"><option>주</option></Select>
      <Cell $w={13} aria-label="구분 열기"><Down /></Cell>
    </Group>
    <Group><Cell $w={18}>전</Cell></Group>
    <Group>
      <Picked $w={53}>
        {selected ? <CodeField aria-label="종목코드" defaultValue="013310" /> : <Field $w={48} aria-label="종목코드" defaultValue="013310" />}
      </Picked>
      <Cell $w={14} aria-label="종목 목록"><Down /></Cell>
      <Cell $w={19} aria-label="종목 검색">{icons.search}</Cell>
    </Group>
    <Group>
      <Cell $w={17} aria-label="소리">{icons.sound}</Cell>
      <Cell $w={10} aria-label="소리 설정"><Down /></Cell>
    </Group>
    <Group><NameTag><NewTag>신</NewTag>아진산업</NameTag></Group>
    <Segments items={["일", "주", "월", "년"]} active={period} />
    <Segments items={["분", "초", "틱"]} active={period} />
    <Segments items={units} active={unit} dim={!unit} num />
    <Group>
      <Select $w={interval ? 23 : 20} $off={!interval} disabled={!interval} aria-label="주기" defaultValue={interval}><option>{interval}</option></Select>
      <Cell $w={14} aria-label="주기 목록"><Down c={interval ? "#555" : "#aaa"} /></Cell>
    </Group>
    <Group><Field $w={28} $align="right" aria-label="표시 개수" defaultValue={count} /></Group>
    <Total>{total}</Total>
    <Group>
      <Cell $w={18} aria-label="차트 추가">{icons.candles}</Cell>
      <Cell aria-label="지표 추가">{icons.waves}</Cell>
      <Cell aria-label="저장">{icons.save}</Cell>
      <Cell aria-label="설정">{icons.gear}</Cell>
    </Group>
    {day && <DayBox><input type="checkbox" />D</DayBox>}
    <Group>
      <Field $w={date.length > 5 ? 64 : 37} aria-label="날짜" defaultValue={date} />
      <Cell $w={18} aria-label="달력">{icons.cal}</Cell>
    </Group>
  </ToolRow>
);

const Quote = ({ lead }) => (
  <ToolRow $top={3}>
    <Strip>
      <Figure $w={lead} $c="#1548c0">3,985</Figure>
      <Falling $w={15} $c="#1548c0">▼</Falling>
      <Figure $w={47} $c="#1548c0">70</Figure>
      <Figure $w={51} $pad={2} $c="#1548c0" $end>-1.73%</Figure>
      <Figure $w={69}>2,362,808</Figure>
      <Figure $w={58} $c="#1548c0">23.97%</Figure>
      <Figure $w={43} $pad={2} $end>6.09%</Figure>
      <Figure $w={82} $pad={2} $end>9,482백만</Figure>
      <Figure $w={38}>최우선</Figure>
      <Figure $w={43} $c="#1548c0">3,990</Figure>
      <Figure $w={59} $pad={9} $c="#1548c0" $end>3,985</Figure>
      <Figure $w={13}>시</Figure>
      <Figure $w={40} $c={RED}>4,090</Figure>
      <Figure $w={21}>고</Figure>
      <Figure $w={40} $c={RED}>4,095</Figure>
      <Figure $w={21}>저</Figure>
      <Figure $w={50} $pad={10} $c="#1548c0">3,955</Figure>
    </Strip>
    <Order $buy>매수</Order>
    <Order>매도</Order>
  </ToolRow>
);

const LetterTool = styled(Tool)`
  color: #666;
  font: bold 15px/16px ${UI};
`;
const TOOLS = ["addBox", "boxes", "fit", "cross", "hline", "vline", "slope", "eraser", "sheets", "search", "minus", "plus"];
const ChartControls = ({ first, thumb }) => (
  <Controls>
    <Push $w={first} aria-label="왼쪽"><Svg w={6} h={8} c="none"><path d="M5 0v8L1 4z" fill="#000" /></Svg></Push>
    <Track><Thumb $w={thumb} /></Track>
    <Push aria-label="재생"><Svg w={9} h={9} c="none"><path d="M4 1v8l4-4z" fill="#000" /></Svg></Push>
    <Push aria-label="뒤로"><Svg w={9} h={9} c="none"><path d="M4 1v8L0 5zM8 1v8L4 5z" fill="#000" /></Svg></Push>
    <Push aria-label="정지"><Svg w={9} h={9} c="none"><path d="M2 2h6v6H2z" fill="#000" /></Svg></Push>
    <Push aria-label="앞으로"><Svg w={9} h={9} c="none"><path d="M1 1v8l4-4zM5 1v8l4-4z" fill="#000" /></Svg></Push>
    <Range type="range" min="0" max="100" defaultValue="35" aria-label="속도" />
    <ToolSet>
      {TOOLS.map((t) => <Tool key={t} $on={t === "cross"} aria-label={t}>{icons[t]}</Tool>)}
      <LetterTool>A</LetterTool>
    </ToolSet>
  </Controls>
);

const TITLE = ["[0600] 키움종합차트 - KOSDAQ", "외국인보유[1,076(천)]", "주식수[38,807(천)]", "액면[500]", "자본금[194(억)]", "결산[12월]", "EPS[378]", "PER[10.55]", "시가총액[1,546(억)]", "유통비율[67.0]"];

export default function App() {
  return (
    <Stage>
      <Global />
      <Windows>
        <TopWindow>
          <TitleBar>
            <TitleBadge>1</TitleBadge>
            <Title>{TITLE.map((t) => <span key={t}>{t}</span>)}</Title>
            <WindowTools>
              <WindowTool aria-label="축소"><Svg w={12} h={12} c="#d8d8d8"><path d="M1 1.500h10.500v10H1zM1 6h5v5" strokeWidth="1.500" /></Svg></WindowTool>
              <WindowTool $w={14} aria-label="복제"><Svg w={14} h={12} c="#d8d8d8"><path d="M4.500 1.500h8v6h-8zM1 4v7h9" strokeWidth="1.500" /></Svg></WindowTool>
              <WindowTool aria-label="고정"><Svg w={12} h={14} c="#d8d8d8"><path d="M2 0h8v2H9v4l3 3H0l3-3V2H2zM6 9h1v5H6z" fill="#d8d8d8" stroke="none" /></Svg></WindowTool>
              <WindowTool $w={11}>T</WindowTool>
              <WindowTool $w={10}>?</WindowTool>
              <WindowTool $w={4} as="span">|</WindowTool>
              <WindowTool aria-label="최소화"><Svg w={12} h={12} c="#d8d8d8"><path d="M1 10h10" strokeWidth="2" /></Svg></WindowTool>
              <WindowTool aria-label="최대화"><Svg w={12} h={12} c="#d8d8d8"><path d="M1.500 2v9h9V2M1 2h10" strokeWidth="1.500" /></Svg></WindowTool>
              <WindowTool aria-label="닫기"><Svg w={12} h={12} c="#d8d8d8"><path d="M2 2l8 8M10 2l-8 8" /></Svg></WindowTool>
            </WindowTools>
          </TitleBar>
          <TopBody>
            <Tools>
              <Toolbar first={18} top={5} period="일" units={["1", "3", "5", "10", "20", "30", "60", "120"]} interval="" count="192" total="/600" date="2021/03/16" />
              <Quote lead={59} />
            </Tools>
            <Panel>
              <DailyChart />
              <ChartControls first={14} thumb={304} />
            </Panel>
          </TopBody>
        </TopWindow>
        <Divider />
        <BottomWindow>
          <div>
            <Tools>
              <Toolbar first={16} top={5} period="분" units={["1", "3", "5", "10", "15", "30", "45", "60"]} unit="3" interval="3" count="327" total="/900" date="03/16" selected day />
              <Quote lead={57} />
            </Tools>
            <Panel>
              <MinuteChart />
              <ChartControls first={12} thumb={344} />
            </Panel>
            <Base />
          </div>
          <Edge />
        </BottomWindow>
      </Windows>
      <Ink viewBox="0 0 1714 868" preserveAspectRatio="xMinYMin meet" aria-hidden="true">
        {SKETCH.map((p) => <polyline key={p} points={p} fill="none" stroke="#ff0000" strokeWidth="1.800" strokeLinejoin="round" />)}
      </Ink>
    </Stage>
  );
}
